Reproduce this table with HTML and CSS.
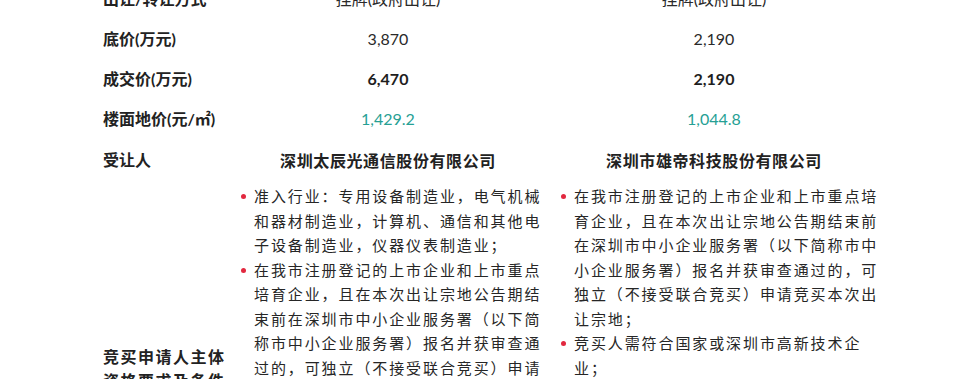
FILE: index.html
```html
<!DOCTYPE html>
<html lang="zh-CN">
<head>
<meta charset="utf-8">
<title>地块出让信息</title>
<link rel="stylesheet" href="styles.css">
</head>
<body>
<div class="table">
  <div class="row">
    <div class="lbl">出让/转让方式</div>
    <div class="val v1">挂牌(政府出让)</div>
    <div class="val v2">挂牌(政府出让)</div>
  </div>
  <div class="row">
    <div class="lbl">底价(万元)</div>
    <div class="val v1">3,870</div>
    <div class="val v2">2,190</div>
  </div>
  <div class="row">
    <div class="lbl">成交价(万元)</div>
    <div class="val v1 strong">6,470</div>
    <div class="val v2 strong">2,190</div>
  </div>
  <div class="row">
    <div class="lbl">楼面地价(元/㎡)</div>
    <div class="val v1 teal">1,429.2</div>
    <div class="val v2 teal">1,044.8</div>
  </div>
  <div class="row row-owner">
    <div class="lbl">受让人</div>
    <div class="val v1 company">深圳太辰光通信股份有限公司</div>
    <div class="val v2 company">深圳市雄帝科技股份有限公司</div>
  </div>
  <div class="row row-tall">
    <div class="lbl lbl-wide">竞买申请人主体<br>资格要求及条件</div>
    <ul class="reqs r1">
      <li>准入行业：专用设备制造业，电气机械和器材制造业，计算机、通信和其他电子设备制造业，仪器仪表制造业；</li>
      <li>在我市注册登记的上市企业和上市重点培育企业，且在本次出让宗地公告期结束前在深圳市中小企业服务署（以下简称市中小企业服务署）报名并获审查通过的，可独立（不接受联合竞买）申请竞买本次出让宗地；</li>
      <li>竞买人需符合国家或深圳市高新技术企业；</li>
      <li>竞买人须承诺竞得土地后，在本次出让宗地上建设的产业用房须全部自用，不得转让、出租或用于其他经营用途，并接受相关部门的监管；</li>
    </ul>
    <ul class="reqs r2">
      <li>在我市注册登记的上市企业和上市重点培育企业，且在本次出让宗地公告期结束前在深圳市中小企业服务署（以下简称市中小企业服务署）报名并获审查通过的，可独立（不接受联合竞买）申请竞买本次出让宗地；</li>
      <li>竞买人需符合国家或深圳市高新技术企业；</li>
      <li>竞买人须承诺竞得土地后，在本次出让宗地上建设的产业用房须全部自用，不得转让、出租或用于其他经营用途，并接受相关部门的监管；</li>
    </ul>
  </div>
</div>
</body>
</html>
```

FILE: styles.css
```css
html, body {
  margin: 0;
  padding: 0;
  background: #ffffff;
}

body {
  font-family: "Lato", "Noto Sans CJK SC", sans-serif;
  color: #222222;
}

.table {
  padding-left: 103px;
  margin-top: -21px;
}

.row {
  display: grid;
  grid-template-columns: 134px 318px 330px;
  height: 40px;
  align-items: center;
}

.row-owner {
  height: 42px;
}

.row-tall {
  height: auto;
  align-items: center;
}

.lbl {
  font-size: 16px;
  font-weight: 700;
  color: #222222;
  white-space: nowrap;
  line-height: 20px;
}

.lbl-wide {
  font-family: "Noto Sans CJK SC", sans-serif;
  letter-spacing: 1.5px;
  line-height: 24.5px;
}

.val {
  text-align: center;
  font-size: 16px;
  line-height: 20px;
  color: #2a2a2a;
  white-space: nowrap;
}

.v1 {
  padding-right: 16px;
}

.v2 {
  padding-right: 12px;
}

.strong {
  font-weight: 700;
  color: #1e1e1e;
}

.teal {
  color: #26a094;
}

.company {
  font-family: "Noto Sans CJK SC", sans-serif;
  font-weight: 700;
  letter-spacing: 0.6px;
  color: #222222;
}

.reqs {
  align-self: start;
  list-style: none;
  margin: 0;
  padding: 3px 5px 4px 4px;
  font-family: "Noto Sans CJK SC", sans-serif;
  font-size: 15px;
  letter-spacing: 1.9px;
  line-height: 24.5px;
  color: #262626;
}

.reqs.r2 {
  padding-left: 6px;
  padding-right: 0;
}

.reqs li {
  position: relative;
  padding-left: 13px;
}

.reqs li::before {
  content: "";
  position: absolute;
  left: 0;
  top: 10px;
  width: 5px;
  height: 5px;
  border-radius: 50%;
  background: #e2283f;
}
```
